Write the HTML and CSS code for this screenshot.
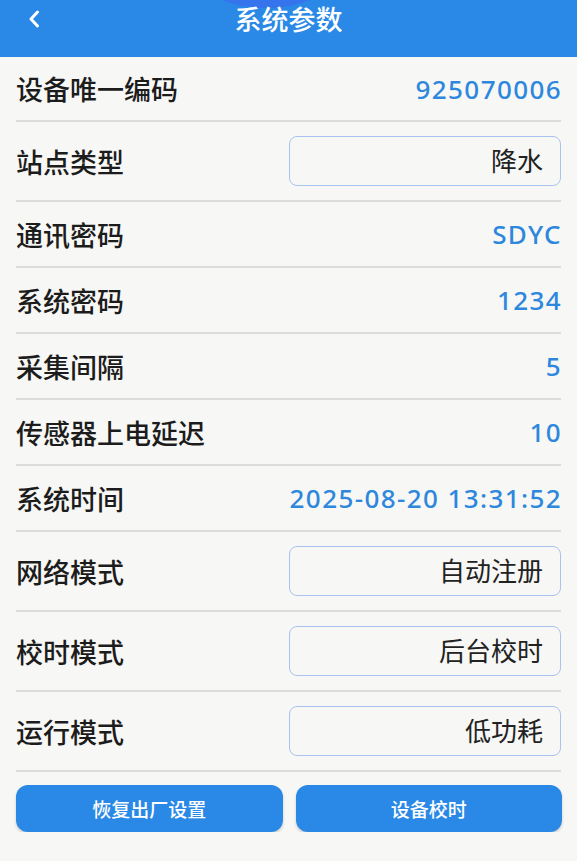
FILE: index.html
```html
<!DOCTYPE html>
<html lang="zh-CN">
<head>
<meta charset="utf-8">
<title>系统参数</title>
<link rel="stylesheet" href="styles.css">
</head>
<body>
<header class="topbar">
  <span class="blob"></span>
  <div class="back">
    <svg width="12" height="18" viewBox="0 0 12 18"><path d="M9.5 2 L3 9 L9.5 16" fill="none" stroke="#fff" stroke-width="3" stroke-linecap="round" stroke-linejoin="round"/></svg>
  </div>
  <h1 class="title">系统参数</h1>
  <div class="spacer"></div>
</header>
<main class="list">
  <div class="row"><span class="label">设备唯一编码</span><span class="value">925070006</span></div>
  <div class="row row-input"><span class="label">站点类型</span><div class="field">降水</div></div>
  <div class="row"><span class="label">通讯密码</span><span class="value">SDYC</span></div>
  <div class="row"><span class="label">系统密码</span><span class="value">1234</span></div>
  <div class="row"><span class="label">采集间隔</span><span class="value">5</span></div>
  <div class="row"><span class="label">传感器上电延迟</span><span class="value">10</span></div>
  <div class="row"><span class="label">系统时间</span><span class="value">2025-08-20 13:31:52</span></div>
  <div class="row row-input"><span class="label">网络模式</span><div class="field">自动注册</div></div>
  <div class="row row-input"><span class="label">校时模式</span><div class="field">后台校时</div></div>
  <div class="row row-input"><span class="label">运行模式</span><div class="field">低功耗</div></div>
</main>
<div class="actions">
  <button class="btn">恢复出厂设置</button>
  <button class="btn">设备校时</button>
</div>
</body>
</html>
```

FILE: styles.css
```css
* { box-sizing: border-box; }
body {
  margin: 0;
  background: #f7f7f5;
  font-family: "Noto Sans CJK SC", "Noto Sans", sans-serif;
  color: #1c1c1c;
}
.topbar {
  position: relative;
  height: 57px;
  background: #2a88e6;
  display: grid;
  grid-template-columns: 1fr auto 1fr;
  align-items: start;
  overflow: hidden;
}
.blob {
  position: absolute;
  left: 198px;
  top: -58px;
  width: 136px;
  height: 66px;
  border-radius: 50%;
  background: #3574ec;
}
.back {
  position: relative;
  padding: 10px 0 0 28px;
  line-height: 0;
}
.title {
  position: relative;
  margin: 0;
  padding-top: 3px;
  font-size: 27px;
  line-height: 32px;
  font-weight: 500;
  color: #fff;
}
.list {
  padding: 0 16px;
}
.row {
  display: flex;
  justify-content: space-between;
  align-items: center;
  height: 66px;
  border-bottom: 2px solid #dcdcdc;
}
.row:first-child { height: 65px; }
.row-input { height: 80px; }
.label {
  font-size: 27px;
  font-weight: 500;
  color: #1c1c1c;
}
.value {
  font-family: "Noto Sans", sans-serif;
  font-size: 26px;
  font-weight: 500;
  letter-spacing: 1.4px;
  margin-right: -1px;
  color: #2d87dd;
}
.field {
  width: 272px;
  height: 50px;
  border: 1.5px solid #a9c3ef;
  border-radius: 8px;
  text-align: right;
  padding-right: 17px;
  font-size: 26px;
  line-height: 46px;
  color: #222;
}
.actions {
  display: flex;
  gap: 13px;
  padding: 13px 15px 0 16px;
}
.btn {
  flex: 1;
  height: 47px;
  border: none;
  border-radius: 12px;
  background: #2a88e6;
  color: #fff;
  font-family: "Noto Sans CJK SC", sans-serif;
  font-size: 19px;
  font-weight: 500;
  box-shadow: 0 2px 3px rgba(0,0,0,0.18);
}
```
